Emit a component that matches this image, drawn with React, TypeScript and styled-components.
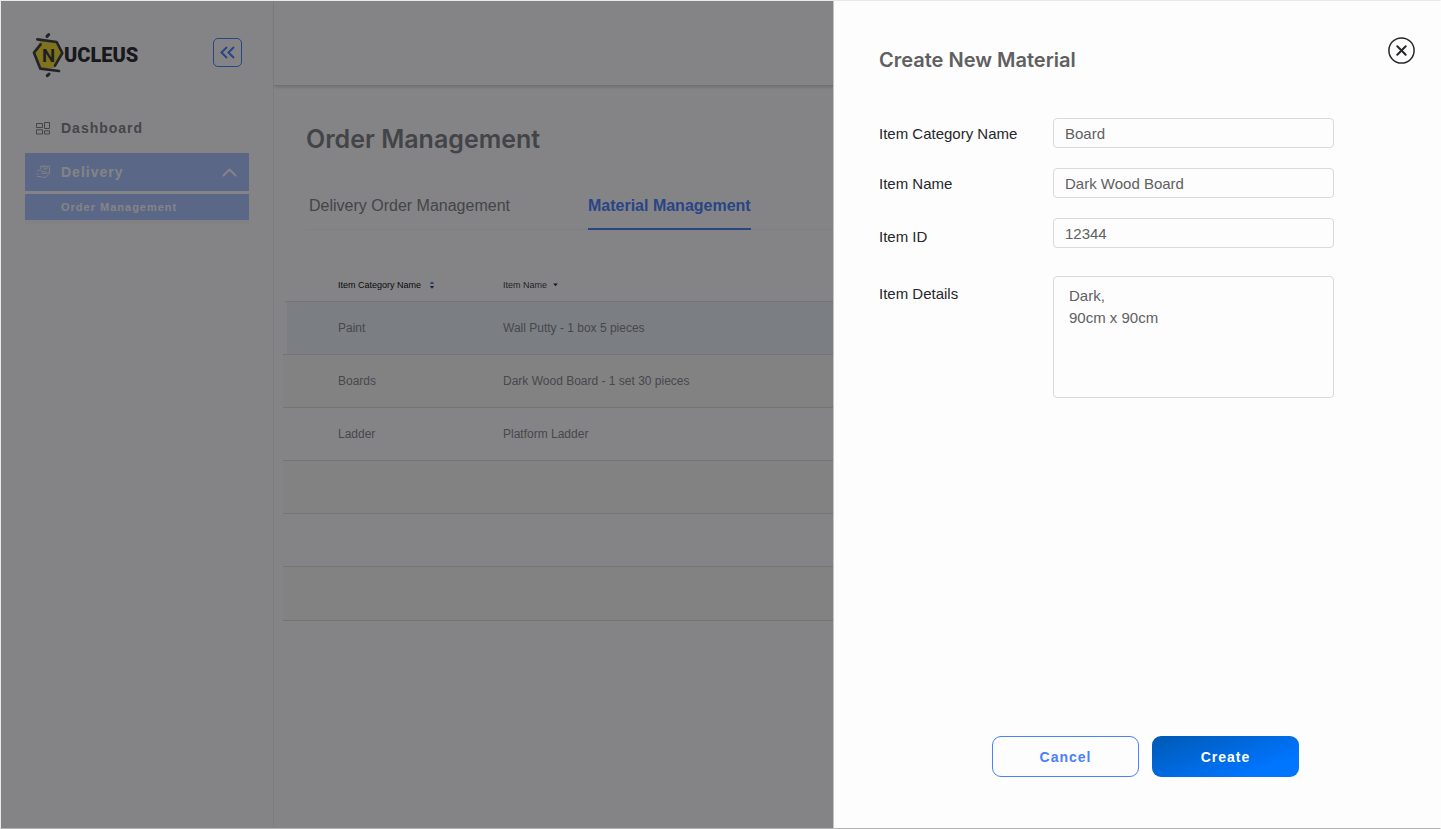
import React from "react";
import styled, { createGlobalStyle } from "styled-components";

const GlobalStyle = createGlobalStyle`
  *, *::before, *::after { box-sizing: border-box; }
  body {
    margin: 0;
    background: #fdfdfd;
    font-family: "Liberation Sans", Arial, sans-serif;
  }
  button, input, textarea { font: inherit; }
`;

const Shell = styled.div`
  position: relative;
  display: flex;
  min-height: 100vh;
  overflow: hidden;
  border: 1px solid #e6e8e9;
  border-right-color: #fdfdfd;
  border-bottom-color: #b4b2b4;
  background: #ffffff;
`;

/* ---------- Sidebar ---------- */

const Sidebar = styled.aside`
  flex: 0 0 273px;
  padding: 32px 24px;
  border-right: 1px solid #f0f0f3;
`;

const SidebarHead = styled.div`
  display: flex;
  align-items: flex-start;
  justify-content: space-between;
  padding: 0 7px;
  height: 75px;
`;

const CollapseButton = styled.button`
  display: grid;
  place-items: center;
  width: 29px;
  height: 29px;
  margin: 5px 0 0;
  padding: 0;
  border: 1px solid #4880ff;
  border-radius: 5px;
  background: transparent;
  color: #4880ff;
`;

const Nav = styled.nav`
  display: flex;
  flex-direction: column;
`;

const NavLink = styled.a<{ $active?: boolean }>`
  display: flex;
  align-items: center;
  gap: 10px;
  height: ${(p) => (p.$active ? 38 : 40)}px;
  margin-bottom: ${(p) => (p.$active ? 3 : 5)}px;
  padding: 0 12px 0 11px;
  background: ${(p) => (p.$active ? "#adc4ff" : "transparent")};
  color: ${(p) => (p.$active ? "#ffffff" : "#808184")};
  font-size: 14px;
  font-weight: 700;
  letter-spacing: 1px;
  line-height: 20px;
  text-decoration: none;

  span { flex: 1; }
`;

const SubLink = styled.a`
  display: flex;
  align-items: center;
  height: 26px;
  padding-left: 36px;
  background: #adc4ff;
  box-shadow: 0 4px 4px rgba(0, 0, 0, 0.03);
  color: #ffffff;
  font-size: 11px;
  font-weight: 700;
  letter-spacing: 1px;
  text-decoration: none;
`;

/* ---------- Main page ---------- */

const Main = styled.main`
  flex: 1;
  min-width: 0;
`;

const TopBar = styled.header`
  height: 85px;
  border-bottom: 1px solid #d8d9dc;
  box-shadow: 0 2px 3px -1px rgba(0, 0, 0, 0.2);
`;

const PageTitle = styled.h1`
  margin: 0;
  padding: 37px 32px 0;
  color: #7d7f82;
  font-family: Inter, sans-serif;
  font-size: 25px;
  font-weight: 600;
  line-height: 32px;
`;

const Tabs = styled.div`
  display: flex;
  gap: 78px;
  margin: 40px 0 0 31px;
  padding-left: 4px;
  border-bottom: 1px solid #f4f4f6;
`;

const Tab = styled.button<{ $active?: boolean }>`
  height: 35px;
  margin-bottom: -1px;
  padding: 0 0 11px;
  border: 0;
  border-bottom: 2px solid ${(p) => (p.$active ? "#4880ff" : "transparent")};
  background: transparent;
  color: ${(p) => (p.$active ? "#4880ff" : "#7d7f82")};
  font-size: 16px;
  font-weight: ${(p) => (p.$active ? 700 : 400)};
  line-height: 20px;
`;

const TableWrap = styled.div`
  padding: 36px 0 0 9px;
`;

const Table = styled.table`
  width: 100%;
  border-spacing: 0;
  table-layout: fixed;
  text-align: left;
`;

const HeadCell = styled.th<{ $active?: boolean }>`
  height: 35px;
  padding: 0 0 0 ${(p) => (p.$active ? 55 : 0)}px;
  color: ${(p) => (p.$active ? "#08080c" : "#3c3d42")};
  line-height: 12px;
`;

const SortButton = styled.button`
  display: inline-flex;
  align-items: center;
  gap: 6px;
  padding: 0;
  border: 0;
  background: transparent;
  color: inherit;
  font-size: 9px;
  font-weight: 400;
`;

const Row = styled.tr<{ $tone: "selected" | "tinted" | "plain" }>`
  td {
    height: 53px;
    padding: 0;
    border-top: 1px solid #dededf;
    background: ${(p) =>
      p.$tone === "selected" ? "#ecf4fa" : p.$tone === "tinted" ? "#fcfbf8" : "#ffffff"};
    color: #85868a;
    font-size: 12px;
  }
  td:first-child {
    padding-left: ${(p) => (p.$tone === "selected" ? 51 : 55)}px;
    border-left: ${(p) => (p.$tone === "selected" ? "4px solid #ffffff" : "0")};
  }
  &:last-child td {
    height: 55px;
    border-bottom: 1px solid #dededf;
  }
`;

/* ---------- Drawer ---------- */

const Backdrop = styled.div`
  position: absolute;
  inset: 0;
  background: rgba(9, 9, 13, 0.5);
`;

const Drawer = styled.section`
  position: absolute;
  top: 0;
  right: 0;
  bottom: 0;
  display: flex;
  flex-direction: column;
  width: 607px;
  max-width: 100%;
  border-left: 1px solid #c4c4c6;
  background: #fdfdfd;
`;

const DrawerHead = styled.header`
  display: flex;
  align-items: flex-start;
  justify-content: space-between;
  padding: 36px 25px 0 45px;
`;

const DrawerTitle = styled.h2`
  margin: 9px 0 0;
  color: #5f6062;
  font-family: Inter, sans-serif;
  font-size: 20px;
  font-weight: 600;
  line-height: 28px;
`;

const CloseButton = styled.button`
  display: block;
  padding: 0;
  border: 0;
  background: transparent;
  color: #26272b;
  line-height: 0;
`;

const Form = styled.form`
  display: flex;
  flex: 1;
  flex-direction: column;
  padding-top: 44px;
`;

const Fields = styled.div`
  display: flex;
  flex-direction: column;
  gap: 20px;
  padding: 0 106px 0 45px;
`;

const Field = styled.div<{ $align?: string }>`
  display: grid;
  grid-template-columns: 174px 1fr;
  align-items: ${(p) => p.$align || "center"};
`;

const Label = styled.label`
  padding-top: 2px;
  color: #26272b;
  font-size: 15px;
  line-height: 22px;
`;

const DetailsField = styled(Field)`
  margin-top: 8px;

  label { padding-top: 7px; }
`;

const Input = styled.input`
  width: 100%;
  height: 30px;
  padding: 0 11px;
  border: 1px solid #d9d9db;
  border-radius: 4px;
  background: #fdfdfd;
  color: #5f6062;
  font-size: 15px;
`;

const TextArea = styled.textarea`
  display: block;
  width: 100%;
  height: 122px;
  padding: 8px 15px;
  border: 1px solid #d9d9db;
  border-radius: 4px;
  background: #fdfdfd;
  color: #5f6062;
  font-size: 15px;
  line-height: 22px;
  resize: none;
`;

const Actions = styled.footer`
  display: flex;
  justify-content: flex-end;
  gap: 13px;
  margin-top: auto;
  padding: 24px 141px 51px 45px;
`;

const ActionButton = styled.button<{ $primary?: boolean }>`
  width: 147px;
  height: 41px;
  padding: 0;
  border: ${(p) => (p.$primary ? "0" : "1px solid #4880ff")};
  border-radius: 9px;
  background: ${(p) =>
    p.$primary ? "linear-gradient(160deg, #0059b3 0%, #0075ff 78%)" : "#fdfdfd"};
  color: ${(p) => (p.$primary ? "#ffffff" : "#4880ff")};
  font-size: 14px;
  font-weight: 700;
  letter-spacing: 1px;
`;

/* ---------- Drawings ---------- */

const Logo = () => (
  <svg width="107" height="47" viewBox="96 99 321 141" role="img" aria-label="Nucleus">
    <path d="M121 122 L168 127 L187 160 L164 204 L122 206 L103 158 Z" fill="#f5dc2c" />
    <g fill="none" stroke="#3b3d42" strokeWidth="8" strokeLinecap="round" strokeLinejoin="round">
      <path d="M112 118 L170 126 L187 159 L165 197" />
      <path d="M122 133 L102 158 L121 206 L177 213" />
      <path d="M141 109 L146 104 M142 227 L147 222" strokeWidth="9" />
    </g>
    <text x="126" y="185" fontFamily="Roboto, sans-serif" fontWeight="700" fontSize="56" fill="#33353a">
      N
    </text>
    <text x="192" y="185" fontFamily="Roboto, sans-serif" fontWeight="900" fontSize="60" fill="#26282c">
      UCLEUS
    </text>
  </svg>
);

const DoubleChevron = () => (
  <svg width="17" height="15" viewBox="0 0 17 15" fill="none" stroke="currentColor" strokeWidth="2" aria-hidden="true">
    <path d="M8 2 L2.5 7.5 L8 13 M15 2 L9.5 7.5 L15 13" />
  </svg>
);

const DashboardIcon = () => (
  <svg width="15" height="13" viewBox="0 0 15 13" fill="none" stroke="currentColor" aria-hidden="true">
    <path d="M0.5 1.5 H6.5 V5.5 H0.5 Z M8.5 0.5 H13.5 V6.5 H8.5 Z M0.5 7.8 H6.5 V12 H0.5 Z M8.5 8.8 H13.5 V12 H8.5 Z" />
  </svg>
);

const DeliveryIcon = () => (
  <svg width="15" height="14" viewBox="0 0 15 14" fill="none" stroke="currentColor" strokeWidth="0.9" strokeLinejoin="round" aria-hidden="true">
    <path d="M4.8 1.2 H13.6 V8 M4.8 1.2 L4.4 4.2" />
    <path d="M8 1.2 V4 H10.8 V1.2" />
    <path d="M0.8 6.4 C2.4 5 4.4 5 5.6 6.2 L8.8 6.8 C10 7.2 9.6 8.6 8.4 8.6 L5.4 8.4" />
    <path d="M9.2 8.8 L12.4 7.6 C13.6 7.4 14 8.2 13.2 9 L9.8 12 C7.4 13.2 4.8 11.4 3 11.4 L0.8 11.6" />
    <path d="M0.6 9 H2.6" />
  </svg>
);

const ChevronUp = () => (
  <svg width="15" height="9" viewBox="0 0 15 9" fill="none" stroke="currentColor" strokeWidth="2" strokeLinecap="round" strokeLinejoin="round" aria-hidden="true">
    <path d="M1.5 7.5 L7.5 1.5 L13.5 7.5" />
  </svg>
);

const SortBoth = () => (
  <svg width="10" height="8" viewBox="0 0 10 8" aria-hidden="true">
    <path d="M2.7 3 L5 0.3 L7.3 3 Z" fill="#3a7bff" />
    <path d="M2.7 5 L5 7.7 L7.3 5 Z" fill="#3a3b40" />
  </svg>
);

const SortDown = () => (
  <svg width="5" height="4" viewBox="0 0 5 4" aria-hidden="true">
    <path d="M0.2 0.5 L2.5 3.3 L4.8 0.5 Z" fill="#26272b" />
  </svg>
);

const CloseIcon = () => (
  <svg width="27" height="27" viewBox="0 0 27 27" fill="none" stroke="currentColor" aria-hidden="true">
    <circle cx="13.5" cy="13.5" r="12.6" strokeWidth="1.5" />
    <path d="M9.3 9.3 L17.7 17.7 M17.7 9.3 L9.3 17.7" strokeWidth="2" strokeLinecap="round" />
  </svg>
);

type Tone = "selected" | "tinted" | "plain";

const rows: { category: string; name: string; tone: Tone }[] = [
  { category: "Paint", name: "Wall Putty - 1 box 5 pieces", tone: "selected" },
  { category: "Boards", name: "Dark Wood Board - 1 set 30 pieces", tone: "tinted" },
  { category: "Ladder", name: "Platform Ladder", tone: "plain" },
  { category: "", name: "", tone: "tinted" },
  { category: "", name: "", tone: "plain" },
  { category: "", name: "", tone: "tinted" },
];

const CategoryCol = styled.col`
  width: 220px;
`;

export default function App() {
  return (
    <>
      <GlobalStyle />
      <Shell>
        <Sidebar>
          <SidebarHead>
            <Logo />
            <CollapseButton type="button" aria-label="Collapse sidebar">
              <DoubleChevron />
            </CollapseButton>
          </SidebarHead>
          <Nav>
            <NavLink href="#dashboard">
              <DashboardIcon />
              <span>Dashboard</span>
            </NavLink>
            <NavLink href="#delivery" $active>
              <DeliveryIcon />
              <span>Delivery</span>
              <ChevronUp />
            </NavLink>
            <SubLink href="#orders">Order Management</SubLink>
          </Nav>
        </Sidebar>

        <Main>
          <TopBar />
          <PageTitle>Order Management</PageTitle>
          <Tabs role="tablist">
            <Tab type="button" role="tab" aria-selected="false">
              Delivery Order Management
            </Tab>
            <Tab type="button" role="tab" aria-selected="true" $active>
              Material Management
            </Tab>
          </Tabs>
          <TableWrap>
            <Table>
              <colgroup>
                <CategoryCol />
                <col />
              </colgroup>
              <thead>
                <tr>
                  <HeadCell $active>
                    <SortButton type="button">
                      Item Category Name <SortBoth />
                    </SortButton>
                  </HeadCell>
                  <HeadCell>
                    <SortButton type="button">
                      Item Name <SortDown />
                    </SortButton>
                  </HeadCell>
                </tr>
              </thead>
              <tbody>
                {rows.map((row, i) => (
                  <Row key={i} $tone={row.tone}>
                    <td>{row.category}</td>
                    <td>{row.name}</td>
                  </Row>
                ))}
              </tbody>
            </Table>
          </TableWrap>
        </Main>

        <Backdrop />

        <Drawer role="dialog" aria-labelledby="drawer-title">
          <DrawerHead>
            <DrawerTitle id="drawer-title">Create New Material</DrawerTitle>
            <CloseButton type="button" aria-label="Close">
              <CloseIcon />
            </CloseButton>
          </DrawerHead>
          <Form onSubmit={(e) => e.preventDefault()}>
            <Fields>
              <Field>
                <Label htmlFor="category">Item Category Name</Label>
                <Input id="category" defaultValue="Board" />
              </Field>
              <Field>
                <Label htmlFor="name">Item Name</Label>
                <Input id="name" defaultValue="Dark Wood Board" />
              </Field>
              <Field $align="end">
                <Label htmlFor="item-id">Item ID</Label>
                <Input id="item-id" defaultValue="12344" />
              </Field>
              <DetailsField $align="start">
                <Label htmlFor="details">Item Details</Label>
                <TextArea id="details" defaultValue={"Dark,\n90cm x 90cm"} />
              </DetailsField>
            </Fields>
            <Actions>
              <ActionButton type="button">Cancel</ActionButton>
              <ActionButton type="submit" $primary>
                Create
              </ActionButton>
            </Actions>
          </Form>
        </Drawer>
      </Shell>
    </>
  );
}
